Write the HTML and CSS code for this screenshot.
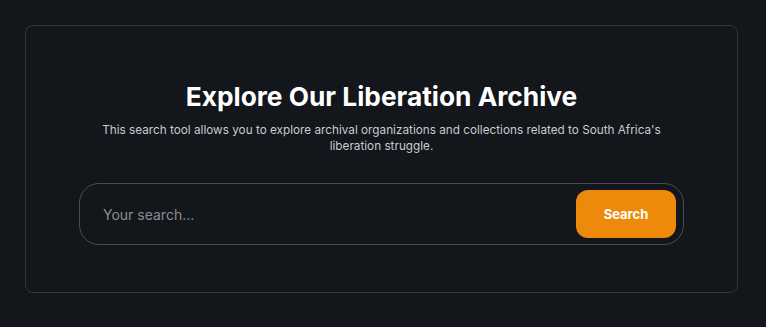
FILE: index.html
```html
<!DOCTYPE html>
<html lang="en">

<head>
  <meta charset="UTF-8">
  <meta name="viewport" content="width=device-width, initial-scale=1.0">
  <title>Liberation Archive</title>
  <link rel="stylesheet" href="styles.css">
</head>

<body>

  <div class="page">
    <section class="archive-card">
      <h1 class="archive-title">Explore Our Liberation Archive</h1>
      <p class="archive-desc">This search tool allows you to explore archival organizations and collections related to South Africa's liberation struggle.</p>

      <form class="search-box" onsubmit="return false">
        <input class="search-input" type="text" placeholder="Your search...">
        <button class="search-btn" type="submit">Search</button>
      </form>
    </section>
  </div>

</body>

</html>
```

FILE: styles.css
```css
* {
  margin: 0;
  padding: 0;
  box-sizing: border-box;
}

body {
  background-color: #13161b;
  font-family: Inter, "Noto Sans", sans-serif;
  color: #fff;
}

/* 外层 */
.page {
  padding: 25px 28px 25px 25px;
}

/* 卡片 */
.archive-card {
  display: flex;
  flex-direction: column;
  align-items: center;
  height: 268px;
  padding: 55px 24px 0;
  border: 1px solid #33363b;
  border-radius: 8px;
  background-color: #13161b;
}

.archive-title {
  font-size: 26.3px;
  line-height: 32px;
  font-weight: 700;
}

.archive-desc {
  max-width: 576px;
  margin-top: 9px;
  font-size: 11.75px;
  line-height: 16px;
  color: #c8cbd0;
  text-align: center;
}

/* 搜索框 */
.search-box {
  display: flex;
  align-items: center;
  width: 605px;
  height: 62px;
  margin-top: 29px;
  padding: 6px 7px 6px 23px;
  border: 1px solid #4a4d52;
  border-radius: 20px;
}

.search-input {
  flex: 1;
  background: transparent;
  border: none;
  outline: none;
  font-family: inherit;
  font-size: 14px;
  color: #fff;
}

.search-input::placeholder {
  color: #8a8e94;
}

.search-btn {
  width: 100px;
  height: 48px;
  border: none;
  border-radius: 12px;
  background-color: #ee8a0b;
  font-family: inherit;
  font-size: 13px;
  font-weight: 700;
  color: #fff;
  cursor: pointer;
}
```
